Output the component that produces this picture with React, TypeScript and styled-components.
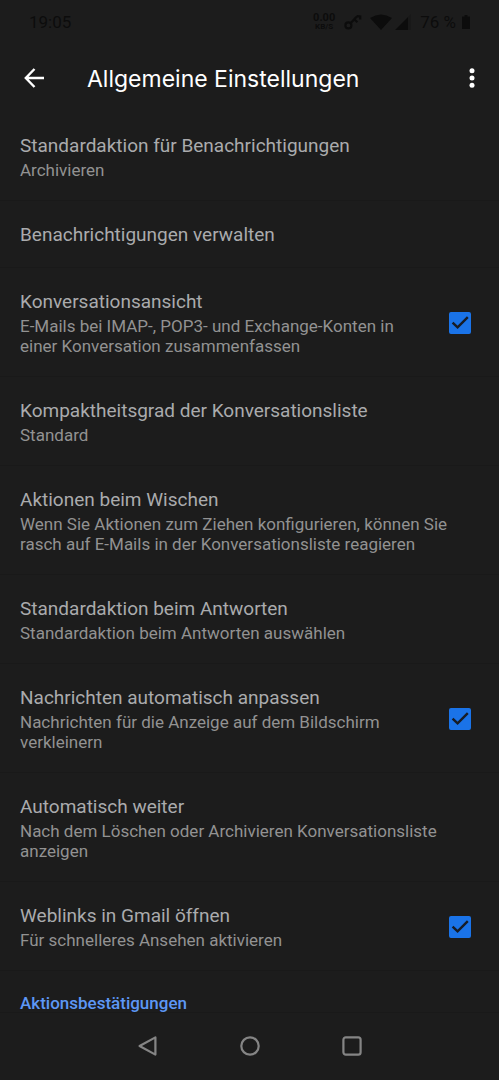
import React, { useId, useState } from "react";
import styled, { createGlobalStyle } from "styled-components";

const GlobalStyle = createGlobalStyle`
  * { box-sizing: border-box; }
  body {
    margin: 0;
    background: #1c1c1c;
    font-family: Roboto, "Liberation Sans", sans-serif;
  }
`;

const Screen = styled.div`
  display: flex;
  flex-direction: column;
  height: 100vh;
  background: #1c1c1c;
`;

const StatusBar = styled.div`
  display: flex;
  align-items: center;
  justify-content: space-between;
  flex: none;
  height: 44px;
  padding: 0 29px;
  color: #0c0c0c;
  font-size: 17px;
`;

const StatusIcons = styled.div`
  display: flex;
  align-items: center;

  svg { flex: none; }
`;

const Speed = styled.div`
  display: flex;
  flex-direction: column;
  align-items: center;
  margin-right: 9px;
  font-size: 11px;
  font-weight: 700;
  line-height: 10px;
`;

const SpeedUnit = styled.span`
  font-size: 8px;
  line-height: 8px;
`;

const WifiIcon = styled.svg`
  margin-left: 8px;
`;

const SignalIcon = styled.svg`
  margin-left: 3px;
`;

const Percent = styled.span`
  margin: 0 6px 0 7px;
`;

const AppBar = styled.header`
  display: flex;
  align-items: center;
  flex: none;
  height: 68px;
  padding: 0 10px 0 17px;
`;

const IconButton = styled.button`
  display: flex;
  align-items: center;
  justify-content: center;
  width: 34px;
  height: 40px;
  padding: 0;
  border: 0;
  background: none;
  color: #fff;
`;

const Title = styled.h1`
  flex: 1;
  margin: 0 0 0 36px;
  padding-top: 2px;
  color: #fff;
  font-family: Inter, Roboto, sans-serif;
  font-size: 23px;
  font-weight: 400;
  line-height: 32px;
  white-space: nowrap;
`;

const List = styled.main`
  flex: 1;
  min-height: 0;
  overflow-y: auto;
  scrollbar-width: none;
`;

const Row = styled.div`
  display: flex;
  align-items: center;
  justify-content: space-between;
  padding: 21px 28px 20px 20px;
  border-bottom: 1px solid #191919;
`;

const RowText = styled.div`
  flex: 1;
  min-width: 0;
`;

const RowTitle = styled.label`
  display: block;
  color: #aaabad;
  font-size: 19px;
  line-height: 25px;
`;

const RowSummary = styled.p`
  margin: 2px 0 0;
  max-width: 430px;
  color: #929292;
  font-size: 17px;
  line-height: 20px;
`;

const CheckWrap = styled.span`
  display: grid;
  flex: none;
  margin-left: 40px;

  > * { grid-area: 1 / 1; }
  svg { pointer-events: none; }
`;

const CheckInput = styled.input`
  appearance: none;
  width: 22px;
  height: 22px;
  margin: 0;
  border: 2px solid #9aa0a6;
  border-radius: 2px;

  &:checked {
    border-color: #1a73e8;
    background: #1a73e8;
  }
`;

const Category = styled.h2`
  margin: 0;
  padding: 22px 20px;
  color: #5d97f5;
  font-size: 17px;
  font-weight: 500;
  line-height: 20px;
`;

const NavBar = styled.nav`
  display: flex;
  align-items: center;
  justify-content: center;
  flex: none;
  gap: 68px;
  height: 68px;
  border-top: 1px solid #191919;
  padding-bottom: 1px;

  ${IconButton} { color: #858585; }
`;

interface Setting {
  title: string;
  summary?: string;
  checkable?: boolean;
}

const settings: Setting[] = [
  { title: "Standardaktion für Benachrichtigungen", summary: "Archivieren" },
  { title: "Benachrichtigungen verwalten" },
  {
    title: "Konversationsansicht",
    summary: "E-Mails bei IMAP-, POP3- und Exchange-Konten in einer Konversation zusammenfassen",
    checkable: true,
  },
  { title: "Kompaktheitsgrad der Konversationsliste", summary: "Standard" },
  {
    title: "Aktionen beim Wischen",
    summary: "Wenn Sie Aktionen zum Ziehen konfigurieren, können Sie rasch auf E-Mails in der Konversationsliste reagieren",
  },
  { title: "Standardaktion beim Antworten", summary: "Standardaktion beim Antworten auswählen" },
  {
    title: "Nachrichten automatisch anpassen",
    summary: "Nachrichten für die Anzeige auf dem Bildschirm verkleinern",
    checkable: true,
  },
  {
    title: "Automatisch weiter",
    summary: "Nach dem Löschen oder Archivieren Konversationsliste anzeigen",
  },
  { title: "Weblinks in Gmail öffnen", summary: "Für schnelleres Ansehen aktivieren", checkable: true },
];

function SettingRow({ title, summary, checkable }: Setting) {
  const id = useId();
  const [checked, setChecked] = useState(true);
  return (
    <Row>
      <RowText>
        {checkable ? <RowTitle htmlFor={id}>{title}</RowTitle> : <RowTitle as="div">{title}</RowTitle>}
        {summary && <RowSummary>{summary}</RowSummary>}
      </RowText>
      {checkable && (
        <CheckWrap>
          <CheckInput id={id} type="checkbox" checked={checked} onChange={(e) => setChecked(e.target.checked)} />
          {checked && (
            <svg width="22" height="22" viewBox="0 0 22 22" fill="none" stroke="#171c26" strokeWidth="2.4">
              <path d="M3.6 10.6 8.6 15.4 18.8 5.2" />
            </svg>
          )}
        </CheckWrap>
      )}
    </Row>
  );
}

export default function App() {
  return (
    <Screen>
      <GlobalStyle />
      <StatusBar>
        <span>19:05</span>
        <StatusIcons>
          <Speed>
            0.00
            <SpeedUnit>KB/S</SpeedUnit>
          </Speed>
          <svg width="18" height="16" viewBox="0 0 18 16" fill="none" stroke="currentColor" strokeWidth="2.2">
            <circle cx="4.4" cy="11.4" r="3" />
            <path d="M6.6 9.2 12 3.4l1.6-1.2 2.6 0.2v3M10.4 5.4l3 2.8" />
          </svg>
          <WifiIcon width="22" height="16" viewBox="0 0 22 16" fill="currentColor">
            <path d="M0 4Q11-3 22 4L11 16Z" />
          </WifiIcon>
          <SignalIcon width="18" height="16" viewBox="0 0 18 16" fill="currentColor">
            <path d="M0 16 13 3v13Z" />
            <path d="M13 3 16 0v16h-3Z" opacity="0.25" />
          </SignalIcon>
          <Percent>76 %</Percent>
          <svg width="8" height="14" viewBox="0 0 8 14" fill="currentColor">
            <path d="M2.5 0h3v1.6H8V14H0V1.6h2.5Z" />
          </svg>
        </StatusIcons>
      </StatusBar>
      <AppBar>
        <IconButton aria-label="Zurück">
          <svg width="20" height="20" viewBox="0 0 20 20" fill="none" stroke="currentColor" strokeWidth="2.4">
            <path d="M10.5 1 1.8 10l8.7 9M2 10h18" />
          </svg>
        </IconButton>
        <Title>Allgemeine Einstellungen</Title>
        <IconButton aria-label="Weitere Optionen">
          <svg width="6" height="20" viewBox="0 0 6 20" fill="currentColor">
            <circle cx="3" cy="2.7" r="2.5" />
            <circle cx="3" cy="10" r="2.5" />
            <circle cx="3" cy="17.3" r="2.5" />
          </svg>
        </IconButton>
      </AppBar>
      <List>
        {settings.map((s) => (
          <SettingRow key={s.title} {...s} />
        ))}
        <Category>Aktionsbestätigungen</Category>
      </List>
      <NavBar>
        <IconButton aria-label="Zurück">
          <svg width="20" height="20" viewBox="0 0 20 20" fill="none" stroke="currentColor" strokeWidth="2.2" strokeLinejoin="round">
            <path d="M17.4 1.4v17.2L1.6 10Z" />
          </svg>
        </IconButton>
        <IconButton aria-label="Startseite">
          <svg width="20" height="20" viewBox="0 0 20 20" fill="none" stroke="currentColor" strokeWidth="2.2">
            <circle cx="10" cy="10" r="8.7" />
          </svg>
        </IconButton>
        <IconButton aria-label="Letzte Apps">
          <svg width="20" height="20" viewBox="0 0 20 20" fill="none" stroke="currentColor" strokeWidth="2.2">
            <rect x="1.4" y="1.4" width="17.2" height="17.2" rx="2.4" />
          </svg>
        </IconButton>
      </NavBar>
    </Screen>
  );
}
